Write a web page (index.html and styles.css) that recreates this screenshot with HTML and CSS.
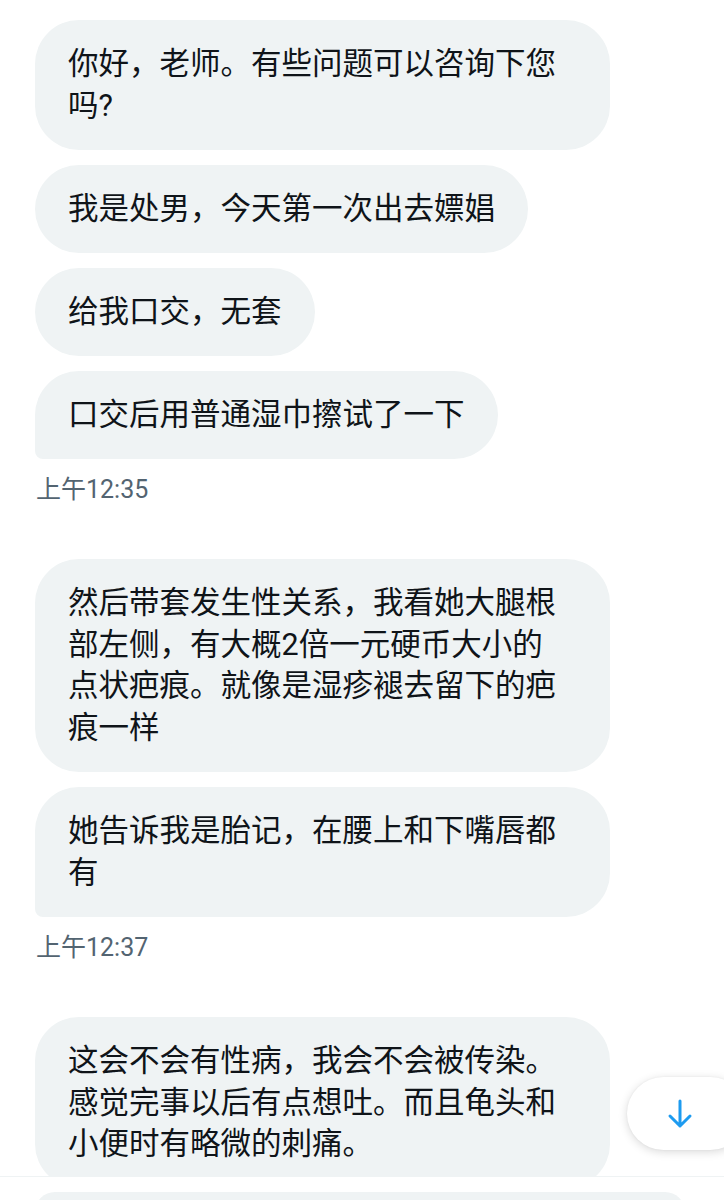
FILE: index.html
```html
<!DOCTYPE html>
<html lang="zh-CN">
<head>
    <meta charset="UTF-8">
    <meta name="viewport" content="width=device-width, initial-scale=1.0">
    <title>私信</title>
    <link rel="stylesheet" href="styles.css">
</head>
<body>
    <div class="conversation">
        <div class="group">
            <div class="bubble">你好，老师。有些问题可以咨询下您吗?</div>
            <div class="bubble">我是处男，今天第一次出去嫖娼</div>
            <div class="bubble">给我口交，无套</div>
            <div class="bubble last">口交后用普通湿巾擦试了一下</div>
            <div class="time">上午12:35</div>
        </div>
        <div class="group">
            <div class="bubble">然后带套发生性关系，我看她大腿根部左侧，有大概2倍一元硬币大小的<br>点状疤痕。就像是湿疹褪去留下的疤痕一样</div>
            <div class="bubble last">她告诉我是胎记，在腰上和下嘴唇都有</div>
            <div class="time">上午12:37</div>
        </div>
        <div class="group">
            <div class="bubble">这会不会有性病，我会不会被传染。感觉完事以后有点想吐。而且龟头和小便时有略微的刺痛。</div>
        </div>
    </div>

    <button class="scroll-down" aria-label="滚动到底部">
        <svg width="28" height="30" viewBox="0 0 28 30">
            <path d="M14 2 V27 M4 17 L14 27 L24 17" fill="none" stroke="#1d9bf0" stroke-width="3" stroke-linecap="round" stroke-linejoin="round"/>
        </svg>
    </button>

    <div class="composer">
        <div class="composer-input"></div>
    </div>
</body>
</html>
```

FILE: styles.css
```css
html, body {
    margin: 0;
    padding: 0;
    height: 1200px;
    overflow: hidden;
    background: #fff;
}
body {
    font-family: Roboto, "Noto Sans CJK SC", sans-serif;
    color: #0f1419;
}
.conversation {
    padding: 20px 0 0 35px;
    display: flex;
    flex-direction: column;
}
.group {
    display: flex;
    flex-direction: column;
    align-items: flex-start;
    gap: 15px;
}
.bubble {
    max-width: 509px;
    background: #eff3f4;
    border-radius: 44px;
    padding: 23.2px 33px;
    font-size: 30.5px;
    line-height: 41.67px;
    word-break: break-all;
}
.bubble.last {
    border-bottom-left-radius: 8px;
}
.time {
    margin: 1px 0 54px 1px;
    font-size: 25px;
    line-height: 30px;
    color: #536471;
}
.scroll-down {
    position: fixed;
    left: 627px;
    top: 1077px;
    width: 120px;
    height: 73px;
    border: none;
    border-radius: 37px;
    background: #fff;
    box-shadow: 0 2px 10px rgba(0, 0, 0, 0.15), 0 0 3px rgba(0, 0, 0, 0.06);
    padding: 0 0 0 39px;
    display: flex;
    align-items: center;
    cursor: pointer;
}
.composer {
    position: fixed;
    left: 0;
    right: 0;
    top: 1176px;
    height: 24px;
    background: #fff;
    border-top: 1px solid #eff3f4;
    padding: 15px 0 0 35px;
    box-sizing: border-box;
}
.composer-input {
    height: 40px;
    width: 650px;
    background: #eff3f4;
    border-radius: 22px;
}
```
